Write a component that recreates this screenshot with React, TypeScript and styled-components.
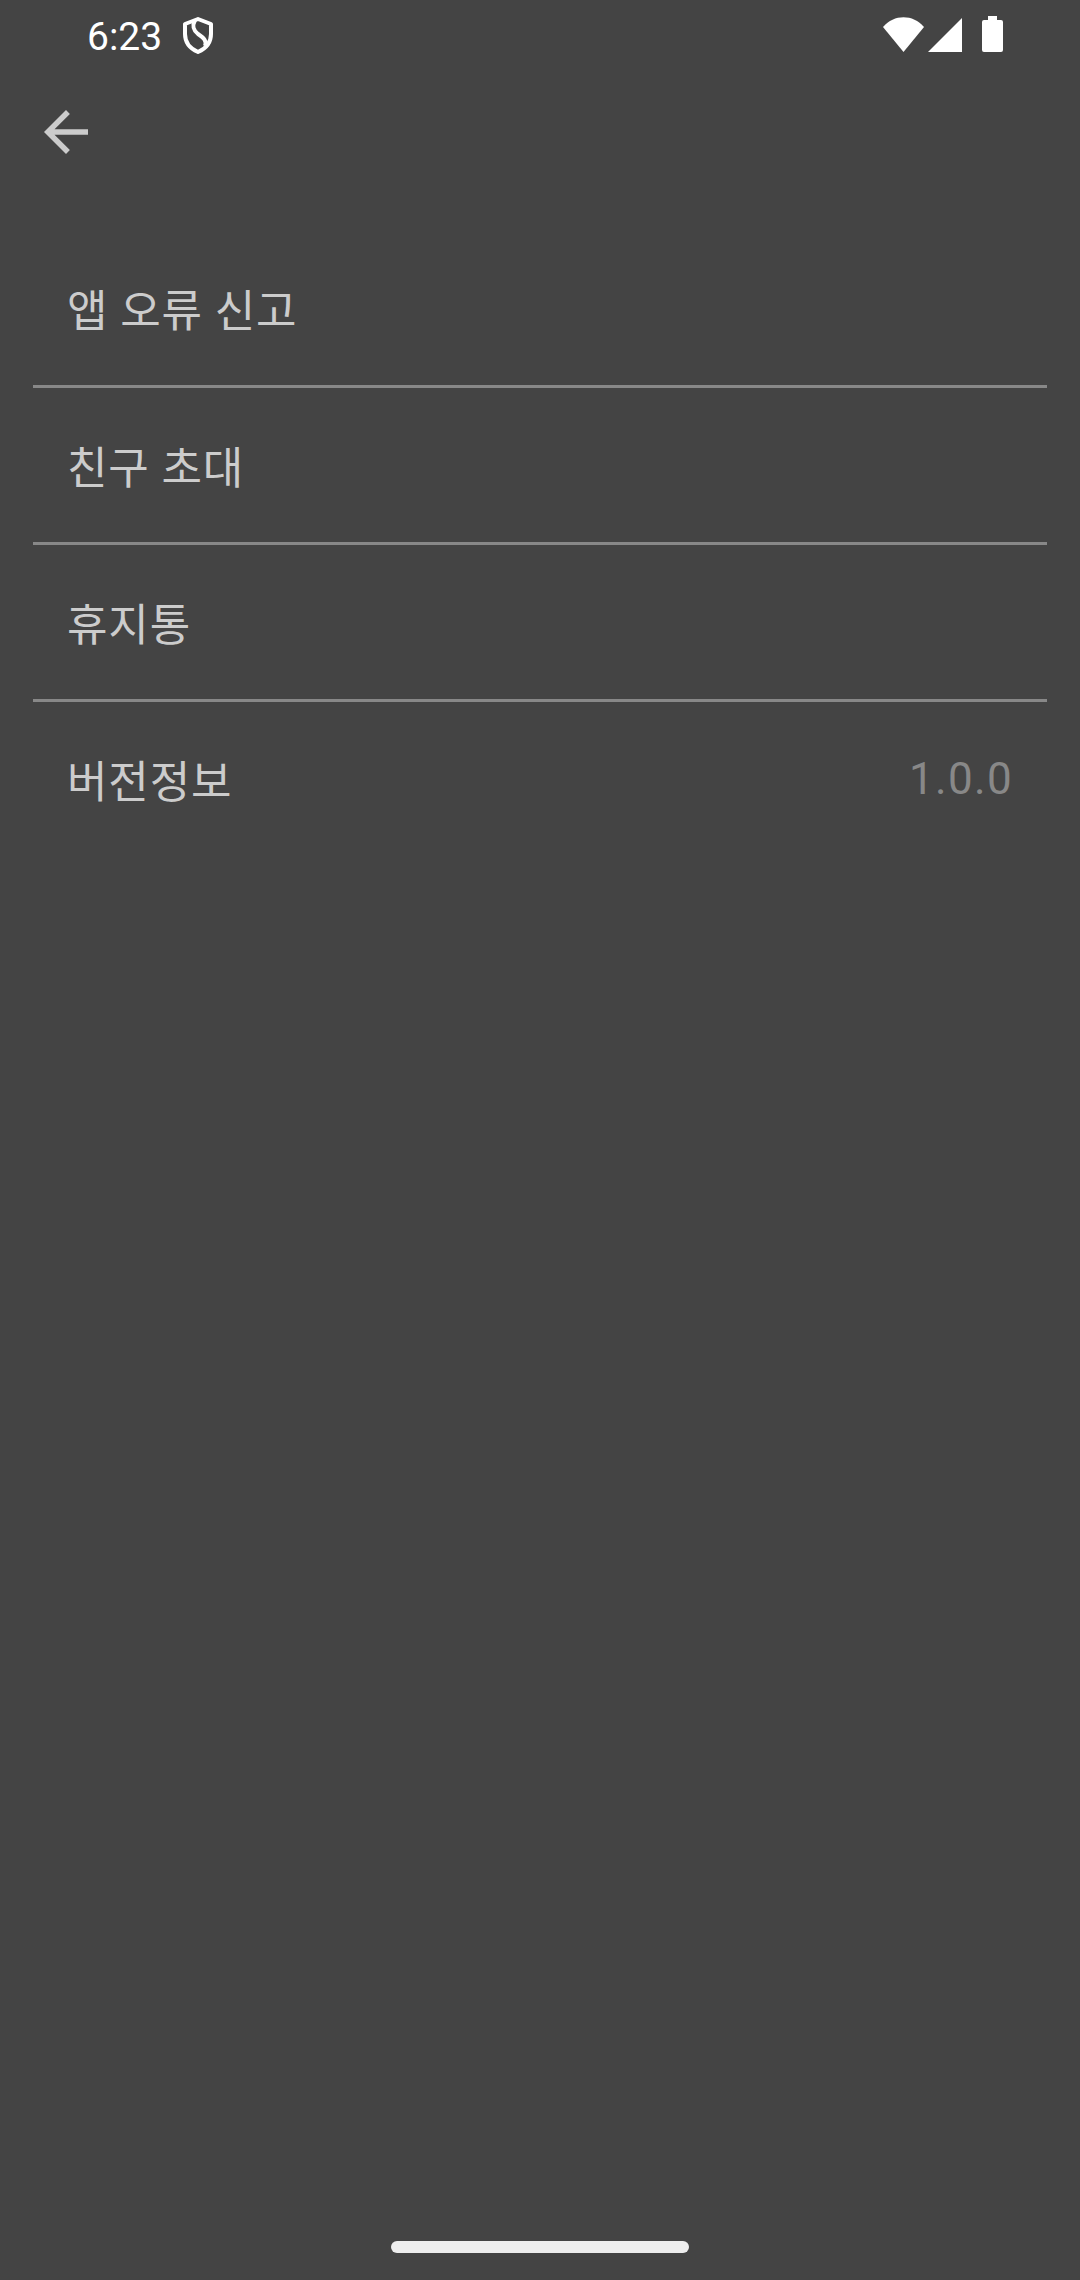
import React from "react";
import styled, { createGlobalStyle } from "styled-components";

const GlobalStyle = createGlobalStyle`
  * { box-sizing: border-box; }
  body {
    margin: 0;
    background: #444444;
    font-family: Roboto, "Noto Sans CJK KR", sans-serif;
  }
`;

const Screen = styled.div`
  display: flex;
  flex-direction: column;
  min-height: 100vh;
`;

const StatusBar = styled.header`
  display: flex;
  align-items: center;
  justify-content: space-between;
  height: 74px;
  padding: 0 63px 0 87px;
  color: #ffffff;
`;

const StatusGroup = styled.div`
  display: flex;
  align-items: center;
`;

const Clock = styled.time`
  margin-right: 20px;
  font-size: 39px;
  line-height: 74px;
`;

const Glyph = styled.svg`
  display: block;
  flex: none;
`;

const AppBar = styled.nav`
  display: flex;
  align-items: center;
  height: 116px;
  padding: 0 33px;
`;

const BackButton = styled.button`
  padding: 0;
  border: 0;
  background: none;
  color: #cccccc;
  cursor: pointer;
`;

const Menu = styled.ul`
  flex: 1;
  margin: 0;
  padding: 41px 33px 0;
  list-style: none;
`;

const MenuItem = styled.li`
  border-bottom: 3px solid #888888;

  &:last-child {
    border-bottom: 0;
  }
`;

const MenuButton = styled.button`
  display: flex;
  align-items: center;
  justify-content: space-between;
  width: 100%;
  height: 154px;
  padding: 0 34px;
  border: 0;
  background: none;
  color: #cccccc;
  font: inherit;
  font-size: 44px;
  letter-spacing: 0.02em;
  text-align: left;
  cursor: pointer;
`;

const Version = styled.span`
  color: #888888;
  letter-spacing: 0.03em;
`;

const GestureArea = styled.footer`
  display: flex;
  justify-content: center;
  height: 39px;
`;

const GestureHandle = styled.div`
  width: 298px;
  height: 12px;
  border-radius: 6px;
  background: #eeeeee;
`;

const items: { label: string; value?: string }[] = [
  { label: "앱 오류 신고" },
  { label: "친구 초대" },
  { label: "휴지통" },
  { label: "버전정보", value: "1.0.0" },
];

export default function App() {
  return (
    <Screen>
      <GlobalStyle />
      <StatusBar>
        <StatusGroup>
          <Clock>6:23</Clock>
          <Glyph width="32" height="40" viewBox="0 0 32 40" fill="none" stroke="currentColor" strokeWidth="4" strokeLinejoin="round">
            <path d="M16 2 L29 7 V17 C29 26 23 32 16 35 C9 32 3 26 3 17 V7 Z" />
            <path d="M13 3 C10 9 11 13 16 17 C22 21 25 24 23 29" />
          </Glyph>
        </StatusGroup>
        <StatusGroup>
          <Glyph width="134" height="42" viewBox="0 0 134 42" fill="currentColor">
            <path d="M0 11 C11 -2 30 -2 41 11 L20.500 36 Z" />
            <path d="M79 2 V36 H45 Z" />
            <path d="M105 0 H114 V4 H118 Q120 4 120 6 V34 Q120 36 118 36 H101 Q99 36 99 34 V6 Q99 4 101 4 H105 Z" />
          </Glyph>
        </StatusGroup>
      </StatusBar>
      <AppBar>
        <BackButton aria-label="뒤로">
          <Glyph width="66" height="66" viewBox="0 0 24 24" fill="currentColor">
            <path d="M20 11H7.830l5.590-5.590L12 4l-8 8 8 8 1.410-1.410L7.830 13H20z" />
          </Glyph>
        </BackButton>
      </AppBar>
      <Menu>
        {items.map(({ label, value }) => (
          <MenuItem key={label}>
            <MenuButton>
              <span>{label}</span>
              {value && <Version>{value}</Version>}
            </MenuButton>
          </MenuItem>
        ))}
      </Menu>
      <GestureArea>
        <GestureHandle />
      </GestureArea>
    </Screen>
  );
}
